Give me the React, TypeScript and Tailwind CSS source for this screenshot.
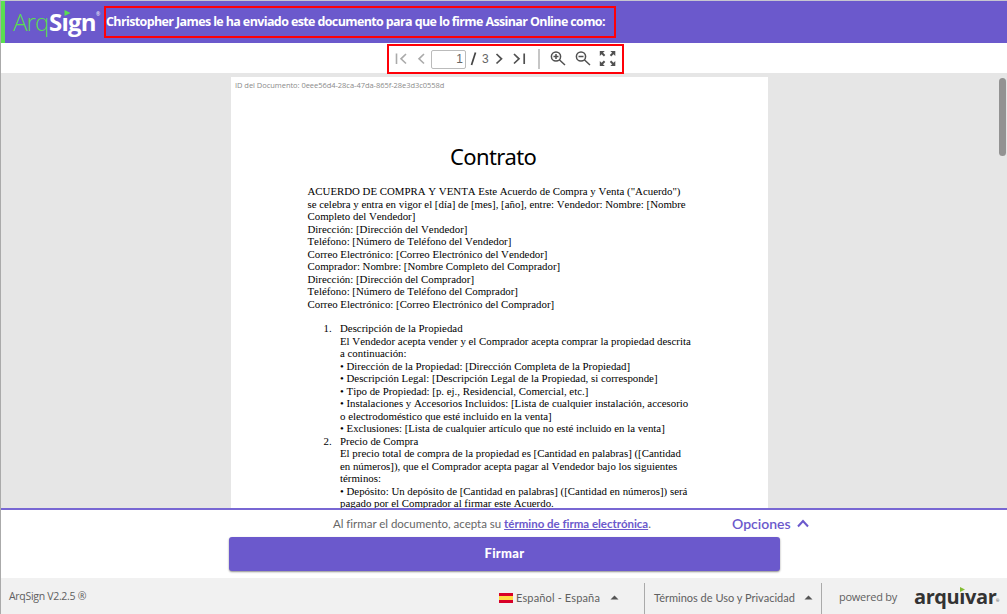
import React from "react";

const contractIntro = [
  'ACUERDO DE COMPRA Y VENTA Este Acuerdo de Compra y Venta ("Acuerdo")',
  "se celebra y entra en vigor el [día] de [mes], [año], entre: Vendedor: Nombre: [Nombre",
  "Completo del Vendedor]",
  "Dirección: [Dirección del Vendedor]",
  "Teléfono: [Número de Teléfono del Vendedor]",
  "Correo Electrónico: [Correo Electrónico del Vendedor]",
  "Comprador: Nombre: [Nombre Completo del Comprador]",
  "Dirección: [Dirección del Comprador]",
  "Teléfono: [Número de Teléfono del Comprador]",
  "Correo Electrónico: [Correo Electrónico del Comprador]",
];

const clauses = [
  [
    "Descripción de la Propiedad",
    "El Vendedor acepta vender y el Comprador acepta comprar la propiedad descrita",
    "a continuación:",
    "• Dirección de la Propiedad: [Dirección Completa de la Propiedad]",
    "• Descripción Legal: [Descripción Legal de la Propiedad, si corresponde]",
    "• Tipo de Propiedad: [p. ej., Residencial, Comercial, etc.]",
    "• Instalaciones y Accesorios Incluidos: [Lista de cualquier instalación, accesorio",
    "o electrodoméstico que esté incluido en la venta]",
    "• Exclusiones: [Lista de cualquier artículo que no esté incluido en la venta]",
  ],
  [
    "Precio de Compra",
    "El precio total de compra de la propiedad es [Cantidad en palabras] ([Cantidad",
    "en números]), que el Comprador acepta pagar al Vendedor bajo los siguientes",
    "términos:",
    "• Depósito: Un depósito de [Cantidad en palabras] ([Cantidad en números]) será",
    "pagado por el Comprador al firmar este Acuerdo.",
  ],
];

function Header() {
  return (
    <header className="flex h-[42px] shrink-0 items-start border-l-4 border-[#5ade50] bg-[#6b59cc]">
      <div className="relative ml-[8px] flex h-[41px] w-[91px] items-center font-['Open_Sans',sans-serif] text-[24px] leading-none whitespace-nowrap text-[#5ade50]">
        <span className="w-[36px] font-light tracking-[-0.9px]">Arq</span>
        <span className="font-bold tracking-[-0.8px] text-white">Sıgn</span>
        <svg className="absolute top-[9px] left-[51px]" width="7" height="6" viewBox="0 0 7 6">
          <path d="M0.500 0L6.500 3L0.500 6Z" fill="#5ade50" />
        </svg>
        <span className="absolute top-[11px] left-[83px] text-[5px] text-white">®</span>
      </div>
      <div className="mt-[5px] flex h-[32px] w-[512px] items-center border-2 border-[#ff0008]">
        <h1 className="pt-px font-['Open_Sans',sans-serif] text-[12.5px] font-bold tracking-[-0.62px] whitespace-nowrap text-white">
          Christopher James le ha enviado este documento para que lo firme Assinar Online como:
        </h1>
      </div>
    </header>
  );
}

function Toolbar() {
  return (
    <div className="flex h-[30px] shrink-0 bg-white pl-[386px]">
      <div className="z-10 mt-px flex h-[30px] w-[237px] shrink-0 items-center border-2 border-[#ff0008] text-[#555]">
        <svg className="shrink-0" width="40" height="26" viewBox="0 0 40 26" fill="none" stroke="#aaa" strokeWidth="1.6">
          <path d="M7.500 7.500V18M17 8L12 12.800L17 17.500M35 8L30 12.800L35 17.500" />
        </svg>
        <div className="ml-[2px] flex h-[19px] w-[35px] shrink-0 items-center justify-end rounded-[2px] border border-[#bbb] pr-[2px] font-['Liberation_Sans',sans-serif] text-[12px] text-[#666]">
          1
        </div>
        <svg className="ml-[4px] shrink-0" width="9" height="26" viewBox="0 0 9 26" fill="none" stroke="#444" strokeWidth="1.7">
          <path d="M1.500 19L5.500 6.500" />
        </svg>
        <span className="ml-[3px] font-['Liberation_Sans',sans-serif] text-[12px] text-[#666]">3</span>
        <svg className="ml-[3px] shrink-0" width="128" height="26" viewBox="0 0 128 26" fill="none" stroke="#505050" strokeWidth="1.7">
          <path d="M4.500 8L9.500 12.800L4.500 17.500M22 8L27 12.800L22 17.500M32.200 7.500V18" />
          <path d="M47 3V23" stroke="#b3b3b3" strokeWidth="1.5" />
          <circle cx="64" cy="10.500" r="4.600" strokeWidth="1.5" />
          <path d="M67.300 13.800L73 19M61.500 10.500H66.500M64 8V13" strokeWidth="1.5" />
          <circle cx="89" cy="10.500" r="4.600" strokeWidth="1.5" />
          <path d="M92.300 13.800L98 19M86.500 10.500H91.500" strokeWidth="1.5" />
          <g transform="translate(0.800 0)" fill="#505050" stroke="none">
            <path d="M107 5h5l-1.800 1.800 2.300 2.300-1.400 1.400-2.300-2.300L107 10z" />
            <path d="M122.500 5v5l-1.800-1.800-2.300 2.300-1.400-1.400 2.300-2.300L117.500 5z" />
            <path d="M107 20v-5l1.800 1.800 2.300-2.300 1.400 1.400-2.300 2.300L112 20z" />
            <path d="M122.500 20h-5l1.800-1.800-2.300-2.300 1.400-1.400 2.300 2.300 1.800-1.800z" />
          </g>
        </svg>
      </div>
    </div>
  );
}

function Contract() {
  return (
    <main className="flex min-h-0 flex-1 justify-between overflow-hidden bg-[#e6e6e6] pl-[230px]">
      <article className="mt-[4px] w-[537px] bg-white">
        <p className="pt-[3px] pl-[4px] font-['Open_Sans',sans-serif] text-[7.5px] leading-[11px] tracking-[-0.04px] text-[#8b8b8b]">
          ID del Documento: 0eee56d4-28ca-47da-865f-28e3d3c0558d
        </p>
        <h2 className="mt-[49px] pl-[219px] font-['Noto_Sans',sans-serif] text-[22px] leading-[32px] tracking-[-0.6px] text-black">
          Contrato
        </h2>
        <div className="mt-[13px] pl-[76.500px] font-['Liberation_Serif',serif] text-[10.85px] leading-[12.5px] [font-kerning:none] whitespace-nowrap text-black">
          {contractIntro.map((line) => (
            <p key={line}>{line}</p>
          ))}
          <ol className="mt-[12px]">
            {clauses.map((lines, i) => (
              <li key={lines[0]} className="flex">
                <span className="w-[32.500px] shrink-0 pl-[16px]">{i + 1}.</span>
                <div>
                  {lines.map((line) => (
                    <p key={line}>{line}</p>
                  ))}
                </div>
              </li>
            ))}
          </ol>
        </div>
      </article>
      <div className="mt-[5px] mr-[1px] h-[78px] w-[7px] rounded-full bg-[#929292]" />
    </main>
  );
}

function SignBar() {
  return (
    <section className="h-[70px] shrink-0 border-t-2 border-[#7867d3] bg-white">
      <div className="flex h-[27px] items-center font-['Lato',sans-serif] whitespace-nowrap">
        <p className="ml-[332px] w-[399px] text-[11.5px] tracking-[-0.02px] text-[#666]">
          Al firmar el documento, acepta su{" "}
          <a className="font-bold text-[#6b59cc] underline">término de firma electrónica</a>.
        </p>
        <button className="flex items-center text-[14px] font-semibold text-[#6b59cc]">
          Opciones
          <svg className="ml-[6px]" width="12" height="9" viewBox="0 0 12 9" fill="none" stroke="#6b59cc" strokeWidth="2">
            <path d="M1 7.500L6 2L11 7.500" />
          </svg>
        </button>
      </div>
      <button className="ml-[228px] block h-[34px] w-[551px] rounded-[3px] bg-[#6b59cc] font-['Lato',sans-serif] text-[13px] font-black tracking-[0.3px] text-white shadow-[0_1px_2px_rgba(0,0,0,0.45)]">
        Firmar
      </button>
    </section>
  );
}

function Caret() {
  return (
    <svg className="mt-[3px]" width="9" height="5" viewBox="0 0 9 5">
      <path d="M0.500 4.500L4.500 0.500L8.500 4.500Z" fill="#555" />
    </svg>
  );
}

function Footer() {
  return (
    <footer className="flex h-[36px] shrink-0 items-center bg-[#f1f1f1] font-['Lato',sans-serif] text-[11px] whitespace-nowrap text-[#606060]">
      <span className="mt-[2px] w-[498px] pl-[8px] font-['Open_Sans',sans-serif] text-[10.5px] tracking-[-0.3px]">ArqSign V2.2.5 ®</span>
      <svg className="mt-[4px]" width="14" height="10" viewBox="0 0 14 10">
        <path d="M0 0H14V10H0Z" fill="#d80027" />
        <path d="M0 3H14V7H0Z" fill="#ffda44" />
      </svg>
      <span className="mt-[4px] ml-[3px] w-[94px] tracking-[0.15px]">Español - España</span>
      <Caret />
      <div className="mt-[5px] ml-[25px] h-[31px] w-px bg-[#aaa]" />
      <span className="mt-[4px] ml-[9px] w-[150px]">Términos de Uso y Privacidad</span>
      <Caret />
      <div className="mt-[5px] ml-[8px] h-[31px] w-px bg-[#aaa]" />
      <span className="mt-[3px] ml-[17px] w-[75px] font-['Open_Sans',sans-serif] text-[11px] tracking-[-0.25px]">powered by</span>
      <div className="mt-[2px] flex items-start font-['Open_Sans',sans-serif] text-[20px] leading-[22px] font-bold tracking-[-0.400px] text-[#333]">
        <span className="relative w-[82px]">
          arquıvar
          <svg className="absolute top-[1px] left-[46px]" width="5" height="5" viewBox="0 0 5 5">
            <path d="M0 0L5 2.500L0 5Z" fill="#83bd32" />
          </svg>
        </span>
        <span className="mt-[12px] text-[4px] leading-[6px] font-normal">®</span>
      </div>
    </footer>
  );
}

export default function App() {
  return (
    <div className="flex h-[614px] w-[1007px] flex-col overflow-hidden border-t border-l border-t-[#c6c6d0] border-l-[#aaa] bg-white">
      <Header />
      <Toolbar />
      <Contract />
      <SignBar />
      <Footer />
    </div>
  );
}
